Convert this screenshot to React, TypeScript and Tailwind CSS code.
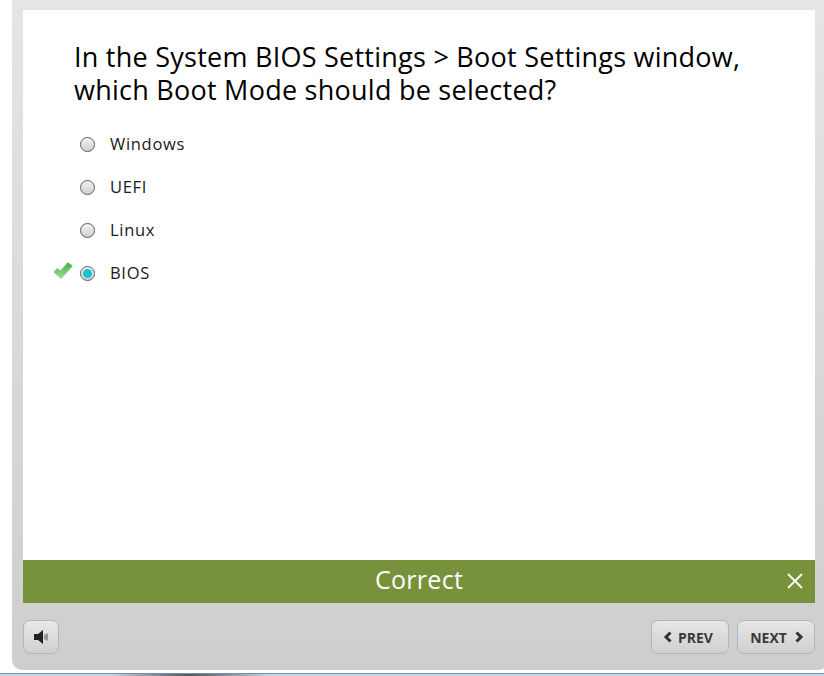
import React from "react";

const font = { fontFamily: '"Open Sans", sans-serif' };

function Radio({ checked }: { checked?: boolean }) {
  return (
    <span className="flex h-[15px] w-[15px] items-center justify-center rounded-full border border-[#5c5c5c] bg-gradient-to-b from-[#f4f4f4] to-[#cfcfcf]">
      {checked && <span className="h-[9px] w-[9px] rounded-full bg-[#12c4d8]" />}
    </span>
  );
}

function Option({ label, checked, mark }: { label: string; checked?: boolean; mark?: boolean }) {
  return (
    <div className="flex h-[43px] items-center">
      <span className="mt-[-6px] flex w-[27px] justify-start">
        {mark && (
          <svg width="20" height="18" viewBox="0 0 20 18">
            <defs>
              <linearGradient id="chk" x1="0" y1="0" x2="0" y2="1">
                <stop offset="0" stopColor="#3fb044" />
                <stop offset="1" stopColor="#a8dca2" />
              </linearGradient>
            </defs>
            <path
              d="M0.5 10 L4 6.5 Q4.5 6 5 6.5 L7.5 8.5 L14.5 0.8 Q15 0.3 15.5 0.8 L19.3 3.5 Q19.8 4 19.3 4.5 L8.8 16.5 Q8 17.3 7.2 16.5 Z"
              fill="url(#chk)"
            />
          </svg>
        )}
      </span>
      <Radio checked={checked} />
      <span className="ml-[15px] text-[16.5px] tracking-[0.7px] text-[#1a1a1a]">{label}</span>
    </div>
  );
}

function ChevronL() {
  return (
    <svg width="10" height="12" viewBox="0 0 10 12">
      <path d="M7.5 1.5 L3 6 L7.5 10.5" fill="none" stroke="#333" strokeWidth="3" />
    </svg>
  );
}

function ChevronR() {
  return (
    <svg width="10" height="12" viewBox="0 0 10 12">
      <path d="M2.5 1.5 L7 6 L2.5 10.5" fill="none" stroke="#333" strokeWidth="3" />
    </svg>
  );
}

export default function App() {
  return (
    <div className="flex h-[676px] w-[824px] flex-col overflow-hidden bg-white" style={font}>
      <div className="ml-[12px] mr-[-4px] flex h-[670px] flex-col rounded-b-[10px] bg-gradient-to-b from-[#e5e5e5] to-[#cecece] pl-[11px] pr-[13px] pt-[10px]">
        <div className="flex h-[550px] flex-col bg-white pl-[51px] pt-[30px]">
          <h1 className="text-[27px] leading-[33px] tracking-[0.25px] font-normal text-black">
            In the System BIOS Settings &gt; Boot Settings window,
            <br />
            which Boot Mode should be selected?
          </h1>
          <div className="mt-[17px] ml-[-21px] flex flex-col">
            <Option label="Windows" />
            <Option label="UEFI" />
            <Option label="Linux" />
            <Option label="BIOS" checked mark />
          </div>
        </div>
        <div className="relative flex h-[43px] items-center justify-center bg-[#78923c] text-[25px] tracking-[0.3px] text-white">
          <span className="mt-[-3px]">Correct</span>
          <svg className="absolute right-[12px] top-[13px]" width="16" height="16" viewBox="0 0 16 16">
            <path d="M1 1 L15 15 M15 1 L1 15" stroke="#fff" strokeWidth="1.8" />
          </svg>
        </div>
        <div className="flex flex-1 items-start justify-between pt-[17px]">
          <button className="flex h-[34px] w-[36px] items-center justify-center rounded-[7px] border border-[#b5b5b5] bg-gradient-to-b from-[#e8e8e8] to-[#d0d0d0]">
            <svg width="16" height="16" viewBox="0 0 16 16">
              <path d="M1 5 H5 L10 1 V15 L5 11 H1 Z" fill="#222" />
              <path d="M12 5.5 V10.5 M14 4.5 V11.5" stroke="#555" strokeWidth="1" />
            </svg>
          </button>
          <div className="flex gap-[8px]">
            <button className="flex h-[34px] w-[78px] items-center justify-center gap-[5px] rounded-[7px] border border-[#b5b5b5] bg-gradient-to-b from-[#e6e6e6] to-[#d0d0d0] pr-[4px] text-[14px] font-bold text-[#3a3a3a]">
              <ChevronL />
              <span>PREV</span>
            </button>
            <button className="flex h-[34px] w-[78px] items-center justify-center gap-[7px] rounded-[7px] border border-[#b5b5b5] bg-gradient-to-b from-[#e6e6e6] to-[#d0d0d0] pl-[2px] text-[14px] font-bold text-[#3a3a3a]">
              <span>NEXT</span>
              <ChevronR />
            </button>
          </div>
        </div>
      </div>
      <div className="mt-[3px] flex h-[3px] border-t border-[#6f8fb5] bg-[#c9d9ea] pl-[110px]">
        <div className="h-[2px] w-[160px] bg-gradient-to-r from-[#c9d9ea] via-[#555] to-[#c9d9ea]" />
      </div>
    </div>
  );
}
